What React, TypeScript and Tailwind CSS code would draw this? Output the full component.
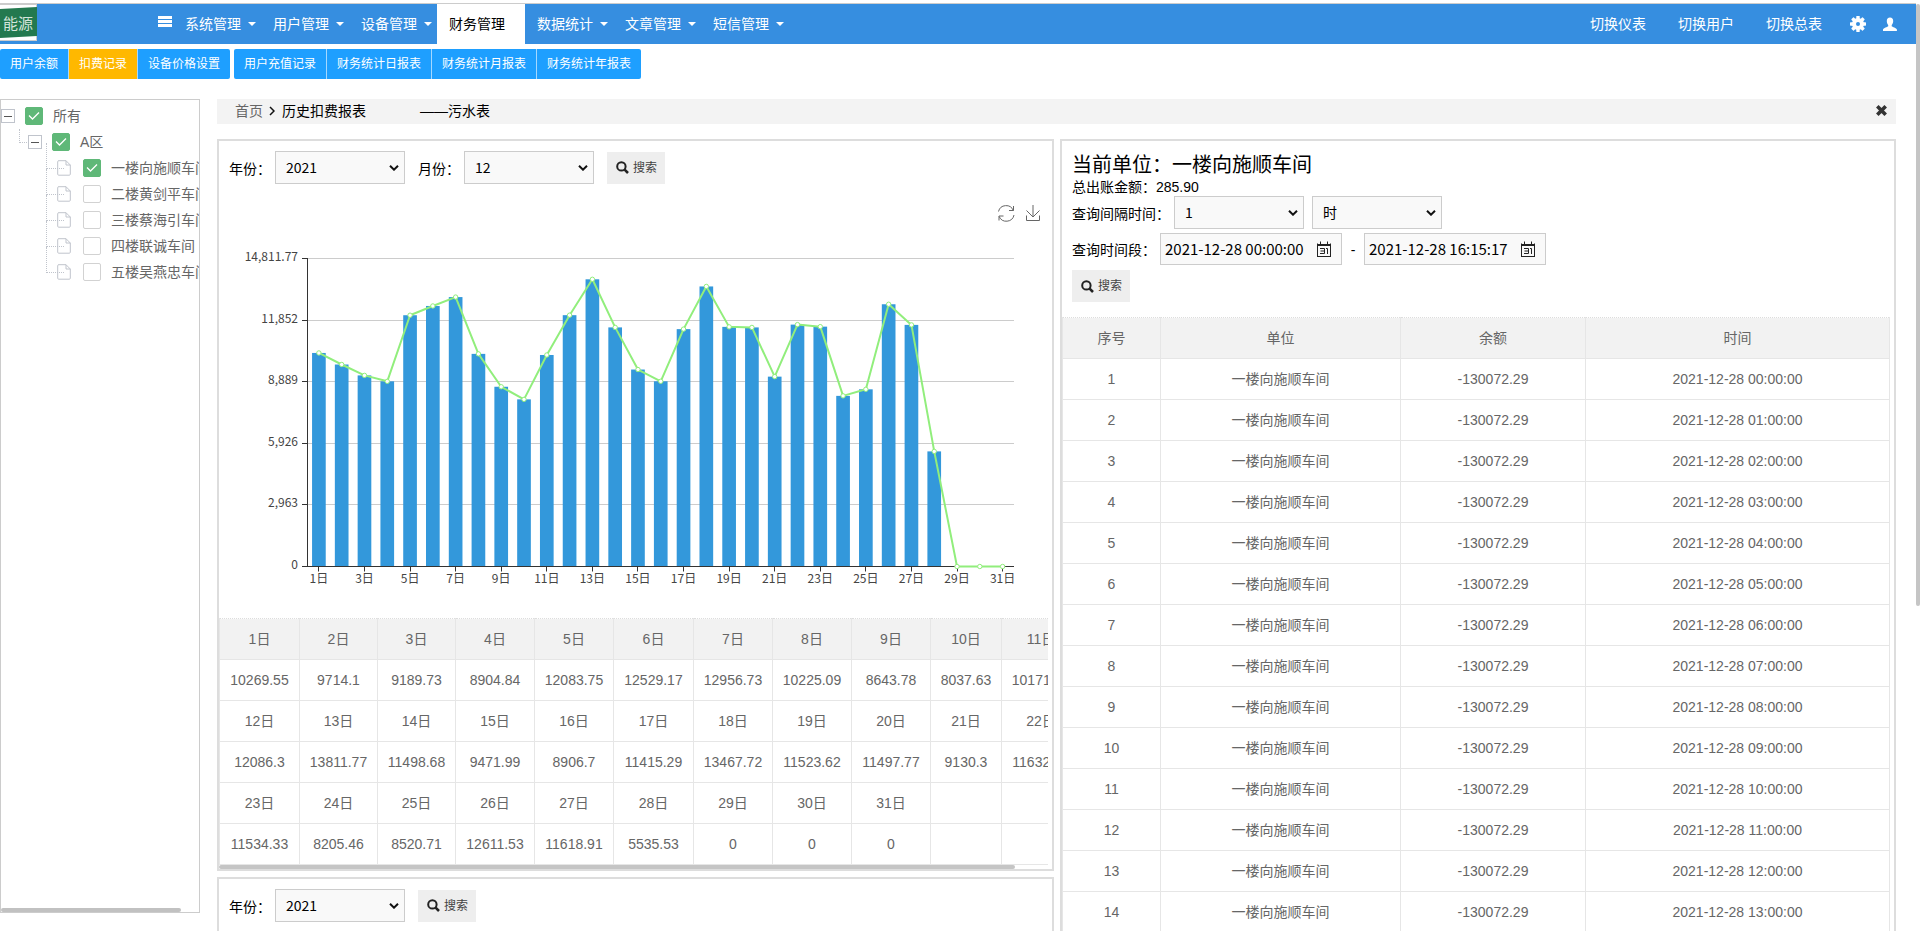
import { useState } from "react";
import clsx from "clsx";

const menus = ["系统管理", "用户管理", "设备管理", "财务管理", "数据统计", "文章管理", "短信管理"];
const switches = ["切换仪表", "切换用户", "切换总表"];

const tabGroups = [
  ["用户余额", "扣费记录", "设备价格设置"],
  ["用户充值记录", "财务统计日报表", "财务统计月报表", "财务统计年报表"],
];

const workshops = [
  "一楼向施顺车间",
  "二楼黄剑平车间",
  "三楼蔡海引车间",
  "四楼联诚车间",
  "五楼吴燕忠车间",
];

const daily = [
  10269.55, 9714.1, 9189.73, 8904.84, 12083.75, 12529.17, 12956.73, 10225.09,
  8643.78, 8037.63, 10171.42, 12086.3, 13811.77, 11498.68, 9471.99, 8906.7,
  11415.29, 13467.72, 11523.62, 11497.77, 9130.3, 11632.54, 11534.33, 8205.46,
  8520.71, 12611.53, 11618.91, 5535.53, 0, 0, 0,
];

const PER_ROW = 11;
const dayRows = [0, 1, 2].map((r) =>
  Array.from({ length: PER_ROW }, (_, c) => r * PER_ROW + c)
);

const records = Array.from({ length: 17 }, (_, i) => ({
  id: i + 1,
  unit: "一楼向施顺车间",
  balance: "-130072.29",
  time: `2021-12-28 ${String(i).padStart(2, "0")}:00:00`,
}));

/* ---------- icons ---------- */

const SearchIcon = () => (
  <svg width="13" height="13" viewBox="0 0 13 13" fill="none" stroke="#222" className="shrink-0">
    <circle cx="5.4" cy="5.4" r="4.2" strokeWidth="2" />
    <path d="M8.6 8.6 12 12" strokeWidth="2.6" />
  </svg>
);

const GearIcon = () => (
  <svg width="16" height="16" viewBox="0 0 16 16" fill="#fff">
    {[0, 45, 90, 135].map((deg) => (
      <rect key={deg} x="6.3" y="0" width="3.4" height="16" rx="0.6" transform={`rotate(${deg} 8 8)`} />
    ))}
    <circle cx="8" cy="8" r="6" />
    <circle cx="8" cy="8" r="2" fill="#368ee0" />
  </svg>
);

const UserIcon = () => (
  <svg width="14" height="14" viewBox="0 0 14 14" fill="#fff">
    <path d="M7 0.4c2.1 0 3.2 1.5 3.2 3.5 0 1.700-.7 3.100-1.500 4v1.300c.5.7 4.900 1.600 5.200 3.300V14H0v-1.500c.3-1.700 4.700-2.600 5.200-3.300V7.900C4.400 7 3.800 5.600 3.800 3.900 3.800 1.900 4.900.4 7 .4z" />
  </svg>
);

const CloseIcon = () => (
  <svg width="11" height="11" viewBox="0 0 11 11" stroke="#333" strokeWidth="3.6">
    <path d="M1.300 1.300 9.700 9.700M9.700 1.300 1.300 9.700" />
  </svg>
);

const CalendarIcon = () => (
  <svg width="14" height="17" viewBox="0 0 14 17" fill="none" stroke="#222">
    <path d="M0.500 2.500V16M13.500 2.500V16M0 15.500H14" />
    <path d="M0 3.500H14M0 4.500H14" />
    <path d="M3.500 0.500V4M10.500 0.500V4" />
    <path d="M3 7.500H7.500V12.500H3M3.500 10H7.500M9 7.500H10.500V13" />
  </svg>
);

const FileIcon = () => (
  <svg width="14" height="16" viewBox="0 0 14 16" fill="none" stroke="#c0c4cc" className="shrink-0">
    <path d="M1.500 0.700H9L13.300 5V14.200a1 1 0 0 1-1 1H1.700a1 1 0 0 1-1-1V1.700a1 1 0 0 1 1-1z" />
    <path d="M9 0.700V5H13.300" />
  </svg>
);

/* ---------- small controls ---------- */

const SearchButton = () => (
  <button type="button" className="flex h-8 items-center gap-1 bg-[#eee] pr-2 pl-[9px] text-xs text-[#444]">
    <SearchIcon />
    搜索
  </button>
);

const Select = ({ id, options, label }: { id: string; options: string[]; label?: string }) => (
  <span className="relative flex">
    <select
      id={id}
      aria-label={label}
      className="h-[33px] w-[130px] appearance-none border border-[#ccc] bg-[#f9f9f9] pb-px pl-2.5 font-[Noto_Sans_CJK_SC,sans-serif] text-sm text-black"
    >
      {options.map((o) => (
        <option key={o}>{o}</option>
      ))}
    </select>
    <svg
      className="pointer-events-none absolute top-3.5 right-1.5"
      width="10"
      height="6"
      viewBox="0 0 10 6"
      fill="none"
      stroke="#111"
      strokeWidth="2"
    >
      <path d="M1 0.800 5 4.700 9 0.800" />
    </svg>
  </span>
);

const DateInput = ({ id, label, value }: { id: string; label?: string; value: string }) => (
  <span className="relative flex">
    <input
      id={id}
      aria-label={label}
      type="text"
      defaultValue={value}
      className="h-8 w-[182px] border border-[#ccc] bg-[#f9f9f9] pb-0.5 pl-1 font-[Noto_Sans_CJK_SC,sans-serif] text-[15px] text-black"
    />
    <span className="pointer-events-none absolute top-2 right-[11px]">
      <CalendarIcon />
    </span>
  </span>
);

const TreeCheck = ({ text, checked }: { text: string; checked: boolean }) => {
  const [on, setOn] = useState(checked);
  return (
    <label className="flex items-center gap-2.5 whitespace-nowrap">
      <span className="relative flex">
        <input
          type="checkbox"
          checked={on}
          onChange={() => setOn(!on)}
          className="size-[18px] appearance-none rounded-xs border border-[#d2d2d2] bg-white checked:border-[#5fb878] checked:bg-[#5fb878]"
        />
        {on && (
          <svg
            className="pointer-events-none absolute inset-0"
            width="18"
            height="18"
            viewBox="0 0 18 18"
            fill="none"
            stroke="#fff"
            strokeWidth="1.300"
          >
            <path d="M4 8.500 7.500 12 14 5.500" />
          </svg>
        )}
      </span>
      {text}
    </label>
  );
};

const Toggle = ({ label }: { label: string }) => (
  <button
    type="button"
    aria-label={label}
    className="relative flex size-3.5 shrink-0 items-center justify-center border border-[#c0c4cc] bg-white"
  >
    <span className="h-px w-2 bg-[#555]" />
  </button>
);

/* ---------- chart ---------- */

const MAX = 14811.77;
const X0 = 88.5;
const X1 = 795;
const Y0 = 382.5;
const H = 308;
const BAND = (X1 - X0) / daily.length;
const yTicks = ["0", "2,963", "5,926", "8,889", "11,852", "14,811.77"];

const px = (i: number) => X0 + BAND * (i + 0.5);
const py = (v: number) => Y0 - (v / MAX) * H;
// keeps hairlines on whole pixels
const snap = (n: number) => Math.floor(n) + 0.5;

const Chart = () => (
  <svg viewBox="0 0 833 434" className="block w-full font-[Noto_Sans_CJK_SC,sans-serif]" fontSize="12">
    {/* refresh / download */}
    <g fill="none" stroke="#666">
      <path d="M779.500 27.500A7.800 7.800 0 0 1 794.300 26.500M794.500 22V26.500H790" />
      <path d="M795 31A7.800 7.800 0 0 1 780.200 32.500M780 36.500V32H784.500" />
      <path d="M807.500 31.500V36.500H820.500V31.500M814 21V33M807.500 26.500 814 33 820.500 26.500" />
    </g>

    {yTicks.map((t, i) => {
      const y = snap(Y0 - (H / 5) * i);
      return (
        <g key={t}>
          {i > 0 && <path d={`M${X0} ${y}H${X1}`} stroke="#ccc" />}
          <path d={`M83 ${y}H${X0}`} stroke="#333" />
          <text x="79" y={y + 2} textAnchor="end" fill="#444">
            {t}
          </text>
        </g>
      );
    })}

    {daily.map((v, i) => (
      <rect
        key={i}
        x={px(i) - BAND * 0.3}
        y={py(v)}
        width={BAND * 0.6}
        height={Y0 - py(v)}
        fill="#3398db"
      />
    ))}

    <path d={`M${X0} 74V383M${X0} ${Y0}H${X1}`} stroke="#333" />
    {daily.map((_, i) =>
      i % 2 === 0 ? (
        <g key={i}>
          <path d={`M${snap(px(i))} ${Y0}v5`} stroke="#333" />
          <text x={px(i)} y="399" textAnchor="middle" fill="#444">
            {i + 1}日
          </text>
        </g>
      ) : null
    )}

    <polyline
      points={daily.map((v, i) => `${px(i)},${py(v)}`).join(" ")}
      fill="none"
      stroke="#91ee7c"
      strokeWidth="2"
      strokeLinejoin="bevel"
    />
    {daily.map((v, i) => (
      <circle key={i} cx={px(i)} cy={py(v)} r="2.2" fill="#fff" stroke="#91ee7c" />
    ))}
  </svg>
);

/* ---------- page parts ---------- */

const Header = () => (
  <header className="flex h-[41px] shrink-0 items-stretch border-t border-[#ccc] bg-[#368ee0] text-sm text-white">
    <svg width="37" height="37" viewBox="0 0 37 37" className="shrink-0">
      <rect width="37" height="37" fill="#ccc" />
      <rect y="1" width="36" height="35" fill="#fff" />
      <path d="M0 5 37 3V32L0 34z" fill="#23794f" />
      <text x="3" y="25" fontSize="15" fill="#d5e5dc" className="font-[Noto_Sans_CJK_SC,sans-serif]">
        能源
      </text>
    </svg>
    <button type="button" aria-label="菜单" className="mr-px ml-[121px] flex w-3.5 flex-col gap-px pt-3">
      <span className="h-[3px] w-full bg-white" />
      <span className="h-[3px] w-full bg-white" />
      <span className="h-[3px] w-full bg-white" />
    </button>
    <nav className="flex">
      {menus.map((m) => {
        const active = m === "财务管理";
        return (
          <a
            key={m}
            href="#"
            className={clsx(
              "flex w-[88px] items-center gap-[7px] pl-3 whitespace-nowrap",
              active && "bg-white text-black"
            )}
          >
            {m}
            {!active && <span className="border-x-4 border-t-4 border-x-transparent border-t-white" />}
          </a>
        );
      })}
    </nav>
    <div className="mr-[19px] ml-auto flex items-center whitespace-nowrap">
      <div className="mr-7 flex gap-8">
        {switches.map((s) => (
          <a key={s} href="#">
            {s}
          </a>
        ))}
      </div>
      <a href="#" aria-label="设置" className="mr-[17px]">
        <GearIcon />
      </a>
      <a href="#" aria-label="用户">
        <UserIcon />
      </a>
    </div>
  </header>
);

const SubNav = () => (
  <nav className="flex gap-1 pt-[5px] text-xs text-white">
    {tabGroups.map((group) => (
      <div key={group[0]} className="flex overflow-hidden rounded-xs">
        {group.map((t, i) => (
          <button
            key={t}
            type="button"
            className={clsx(
              "h-[30px] px-2.5 whitespace-nowrap",
              i > 0 && "border-l border-[#a5d8ff]",
              t === "扣费记录" ? "bg-[#ffb800]" : "bg-[#1e9fff]"
            )}
          >
            {t}
          </button>
        ))}
      </div>
    ))}
  </nav>
);

const Tree = () => (
  <aside className="relative h-[calc(100vh-117px)] w-[200px] shrink-0 overflow-hidden border border-[#ccc] pt-[3px] text-sm text-[#666]">
    <div className="flex h-[26px] items-center gap-2.5">
      <Toggle label="折叠所有" />
      <TreeCheck text="所有" checked />
    </div>
    <div className="relative flex h-[26px] items-center gap-2.5 pl-[27px]">
      <span className="absolute top-0 left-[18px] h-3.5 w-5 border-b border-l border-dotted border-[#c0c4cc]" />
      <Toggle label="折叠A区" />
      <TreeCheck text="A区" checked />
    </div>
    <ul>
      {workshops.map((w, i) => (
        <li key={w} className="relative flex h-[26px] items-center gap-3 pl-14">
          <span className="absolute -top-3 left-[45px] h-[26px] w-[18px] border-b border-l border-dotted border-[#c0c4cc]" />
          <FileIcon />
          <TreeCheck text={w} checked={i === 0} />
        </li>
      ))}
    </ul>
    <div className="absolute bottom-0 left-0 h-1 w-[180px] rounded-xs bg-[#c1c1c1]" />
  </aside>
);

const cell = "h-[41px] border border-[#e6e6e6] text-center";
const headCell = "h-[41px] border border-[#e6e6e6] [border-top:1px_dotted_#ddd] bg-[#f2f2f2] text-center font-normal";

const DayTable = () => (
  <div className="relative mr-1 overflow-hidden pb-1">
    <table className="w-[862px] table-fixed border-collapse text-sm text-[#666]">
      <colgroup>
        <col className="w-20" />
        <col className="w-[78px]" />
        <col className="w-[78px]" />
        <col className="w-[79px]" />
        <col className="w-[79px]" />
        <col className="w-20" />
        <col className="w-[79px]" />
        <col className="w-[79px]" />
        <col className="w-[79px]" />
        <col className="w-[71px]" />
        <col />
      </colgroup>
      <thead>
        <tr>
          {dayRows[0].map((d) => (
            <th key={d} className={headCell}>
              {d + 1}日
            </th>
          ))}
        </tr>
      </thead>
      <tbody>
        {dayRows.flatMap((row, r) => [
          r > 0 && (
            <tr key={`d${r}`}>
              {row.map((d) => (
                <td key={d} className={cell}>
                  {d < 31 ? `${d + 1}日` : ""}
                </td>
              ))}
            </tr>
          ),
          <tr key={`v${r}`}>
            {row.map((d) => (
              <td key={d} className={cell}>
                {daily[d]}
              </td>
            ))}
          </tr>,
        ])}
      </tbody>
    </table>
    <div className="absolute bottom-0 left-0 h-1 w-[96%] rounded-xs bg-[#c5c5c5]" />
  </div>
);

const RecordTable = () => (
  <table className="w-full table-fixed border-collapse text-sm text-[#666]">
    <colgroup>
      <col className="w-[98px]" />
      <col className="w-60" />
      <col className="w-[185px]" />
      <col />
    </colgroup>
    <thead>
      <tr>
        {["序号", "单位", "余额", "时间"].map((h) => (
          <th key={h} className={headCell}>
            {h}
          </th>
        ))}
      </tr>
    </thead>
    <tbody>
      {records.map((r) => (
        <tr key={r.id}>
          <td className={cell}>{r.id}</td>
          <td className={cell}>{r.unit}</td>
          <td className={cell}>{r.balance}</td>
          <td className={cell}>{r.time}</td>
        </tr>
      ))}
    </tbody>
  </table>
);

const App = () => {
  return (
    <div className="relative flex h-screen flex-col overflow-hidden bg-white pt-[3px] pr-1 font-[Liberation_Sans,Noto_Sans_CJK_SC,sans-serif] text-sm text-black">
      <Header />
      <SubNav />
      <div className="flex min-h-0 flex-1 items-start gap-[17px] pt-5 pr-5">
        <Tree />
        <main className="min-w-0 flex-1">
          <div className="flex h-[25px] items-center bg-[#f3f3f3] pr-[9px] pb-0.5 pl-[18px]">
            <a href="#" className="text-[#666]">
              首页
            </a>
            <svg className="mr-[7px] ml-1.5" width="6" height="10" viewBox="0 0 6 10" fill="none" stroke="#111" strokeWidth="1.500">
              <path d="M1 1 5 5 1 9" />
            </svg>
            <span>历史扣费报表</span>
            <span className="ml-[54px]">——污水表</span>
            <button type="button" aria-label="关闭" className="ml-auto">
              <CloseIcon />
            </button>
          </div>

          <div className="mt-[15px] grid grid-cols-[837fr_836fr] items-start gap-1.5">
            <div className="flex min-w-0 flex-col gap-1.5">
              <section className="border-2 border-[#ddd]">
                <div className="flex items-center gap-[13px] px-2.5 pt-2.5">
                  <div className="flex items-center gap-1">
                    <label htmlFor="year" className="pt-0.5">
                      年份：
                    </label>
                    <Select id="year" options={["2021", "2020"]} />
                  </div>
                  <div className="flex items-center gap-1">
                    <label htmlFor="month" className="pt-0.5">
                      月份：
                    </label>
                    <Select id="month" options={["12", "11", "10"]} />
                  </div>
                  <SearchButton />
                </div>
                <Chart />
                <DayTable />
              </section>

              <section className="h-[400px] border-2 border-[#ddd]">
                <div className="flex items-center gap-[13px] px-2.5 pt-2.5">
                  <div className="flex items-center gap-1">
                    <label htmlFor="year2" className="pt-0.5">
                      年份：
                    </label>
                    <Select id="year2" options={["2021", "2020"]} />
                  </div>
                  <SearchButton />
                </div>
              </section>
            </div>

            <section className="min-w-0 border-2 border-[#ddd] pr-1">
              <div className="flex flex-col items-start px-2.5 pt-[11px] pb-[15px]">
                <h2 className="text-xl leading-[27px]">当前单位：一楼向施顺车间</h2>
                <p className="leading-[17px]">总出账金额：285.90</p>
                <div className="flex items-center">
                  <label htmlFor="step" className="mr-1 pt-0.5">
                    查询间隔时间：
                  </label>
                  <Select id="step" options={["1", "2"]} />
                  <span className="w-2" />
                  <Select id="stepUnit" label="间隔单位" options={["时", "日"]} />
                </div>
                <div className="mt-1 flex items-center">
                  <label htmlFor="from" className="mr-1 pt-0.5">
                    查询时间段：
                  </label>
                  <DateInput id="from" value="2021-12-28 00:00:00" />
                  <span className="w-[22px] pt-0.5 text-center">-</span>
                  <DateInput id="to" label="结束时间" value="2021-12-28 16:15:17" />
                </div>
                <div className="mt-[5px]">
                  <SearchButton />
                </div>
              </div>
              <RecordTable />
            </section>
          </div>
        </main>
      </div>
      {/* page scrollbar */}
      <div className="absolute top-1 right-0 h-[602px] w-1 rounded-xs bg-[#c5c5c5]" />
    </div>
  );
};

export default App;
